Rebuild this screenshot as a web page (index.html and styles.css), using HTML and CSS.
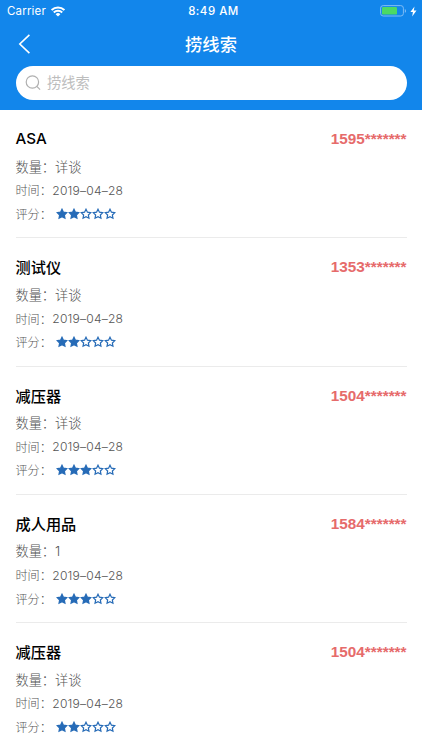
FILE: index.html
```
<!DOCTYPE html>
<html lang="zh-CN">
<head>
<meta charset="utf-8">
<title>捞线索</title>
<link rel="stylesheet" href="styles.css">
</head>
<body>
<svg class="defs" width="0" height="0">
  <symbol id="star" viewBox="0 0 12 12"><path d="M6 1.2 7.45 4.2 10.75 4.65 8.35 6.95 8.95 10.2 6 8.65 3.05 10.2 3.65 6.95 1.25 4.65 4.55 4.2Z"/></symbol>
</svg>
<header class="header">
  <div class="status">
    <div class="status-left">
      <span class="carrier">Carrier</span>
      <svg class="wifi" width="14" height="11" viewBox="0 0 14 11" fill="none" stroke="#fff" stroke-width="2"><path d="M.6 4.1a9 9 0 0 1 12.8 0M2.8 6.5a5.9 5.9 0 0 1 8.4 0"/><path d="M7 10.6 4.6 8.2a3.4 3.4 0 0 1 4.8 0Z" fill="#fff" stroke="none"/></svg>
    </div>
    <span class="clock">8:49 AM</span>
    <div class="status-right">
      <svg width="27" height="12" viewBox="0 0 27 12"><rect x=".6" y=".6" width="22.8" height="10.4" rx="2.6" fill="none" stroke="#7fbcf5"/><rect x="2" y="2" width="15" height="7.6" rx="1.2" fill="#4cd964"/><path d="M24.8 4v3.8q1.3-.5 1.3-1.9T24.8 4Z" fill="#7fbcf5"/></svg>
      <svg width="7" height="11" viewBox="0 0 7 11"><path d="M4.5.4.4 6.1h2.5l-.7 4.5 4.3-6H3.8Z" fill="#fff"/></svg>
    </div>
  </div>
  <div class="nav">
    <svg class="back" width="14" height="21" viewBox="0 0 14 21" fill="none" stroke="#fff" stroke-width="1.6"><path d="M12.4 1.8 2.8 11l9.6 9.2"/></svg>
    <h1 class="heading">捞线索</h1>
  </div>
  <div class="search">
    <svg width="16" height="16" viewBox="0 0 16 16" fill="none" stroke="#b0b0b0" stroke-width="1.2"><circle cx="7.4" cy="7" r="6.2"/><path d="m11.8 11.4 3.3 3.3"/></svg>
    <span class="placeholder">捞线索</span>
  </div>
</header>
<main class="list"></main>
<script src="list.js"></script>
</body>
</html>
```
FILE: styles.css
```
* {
  box-sizing: border-box;
}

body {
  margin: 0;
  height: 750px;
  overflow: hidden;
  background: #fff;
  font-family: Inter, "Noto Sans CJK SC", sans-serif;
}

.defs {
  display: block;
  height: 0;
}

.header {
  height: 110px;
  background: #1286eb;
  color: #fff;
}

.status {
  display: grid;
  grid-template-columns: 1fr auto 1fr;
  align-items: center;
  height: 22px;
  padding: 0 5px 0 7px;
}

.status-left {
  display: flex;
  align-items: center;
  gap: 5.5px;
}

.carrier {
  font-size: 11.5px;
  letter-spacing: 0.18px;
}

.clock {
  font-size: 11.5px;
  font-weight: 500;
  letter-spacing: 0.5px;
  padding-left: 3px;
}

.status-right {
  display: flex;
  align-items: center;
  justify-content: flex-end;
  gap: 3px;
}

.nav {
  display: grid;
  grid-template-columns: 14px 1fr 14px;
  align-items: center;
  height: 43.5px;
  padding: 0 17px;
}

.heading {
  margin: 0;
  padding-top: 3px;
  text-align: center;
  font-size: 17.3px;
  font-weight: 500;
  line-height: 24px;
}

.search {
  display: flex;
  align-items: center;
  gap: 6px;
  height: 34.5px;
  margin: 0 15.5px;
  padding-left: 9.5px;
  border-radius: 17.25px;
  background: #fff;
}

.placeholder {
  color: #bdbdbd;
  font-size: 14.3px;
  line-height: 20px;
}

.list {
  padding: 0 15.5px;
}

.item {
  height: 128.3px;
  padding-top: 16px;
  border-bottom: 1px solid #ebebeb;
}

.item-head {
  display: flex;
  justify-content: space-between;
  align-items: center;
  height: 24px;
  margin-bottom: 4px;
}

.name {
  margin: 0;
  color: #000;
  font-size: 15.2px;
  font-weight: 500;
}

.phone {
  padding-top: 2px;
  color: #e66b6b;
  font-family: "Liberation Sans", sans-serif;
  font-size: 15.3px;
  font-weight: 700;
}

.row {
  display: flex;
  align-items: center;
  height: 23.6px;
  color: #555;
  font-size: 12.1px;
  font-weight: 300;
}

.row-amount {
  height: 24px;
  font-size: 13.2px;
}

.date {
  padding: 1px 0 0 0.5px;
  letter-spacing: 0.2px;
}

.stars {
  display: flex;
  gap: 0.2px;
  margin: 1px 0 0 3.8px;
}

.star {
  width: 12px;
  height: 12px;
  fill: none;
  stroke: #266bb7;
  stroke-width: 1.2;
}

.star-full {
  fill: #266bb7;
}
```
FILE: list.js
```
const items = [
  ["ASA", "1595*******", "详谈", 2],
  ["测试仪", "1353*******", "详谈", 2],
  ["减压器", "1504*******", "详谈", 3],
  ["成人用品", "1584*******", "1", 3],
  ["减压器", "1504*******", "详谈", 2],
];

const stars = (score) =>
  [1, 2, 3, 4, 5]
    .map((n) => `<svg class="star ${n <= score ? "star-full" : ""}"><use href="#star"/></svg>`)
    .join("");

document.querySelector(".list").innerHTML = items
  .map(([name, phone, amount, score]) => `
    <article class="item">
      <div class="item-head"><h2 class="name">${name}</h2><span class="phone">${phone}</span></div>
      <div class="row row-amount"><span>数量：</span><span>${amount}</span></div>
      <div class="row"><span>时间：</span><span class="date">2019–04–28</span></div>
      <div class="row"><span>评分：</span><span class="stars">${stars(score)}</span></div>
    </article>`)
  .join("");
```
